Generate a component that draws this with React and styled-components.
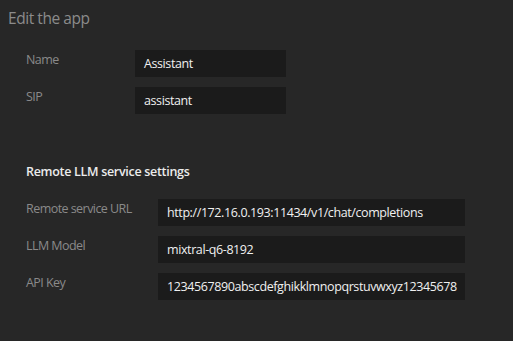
import React from "react";
import styled, { createGlobalStyle } from "styled-components";

const Global = createGlobalStyle`
  html, body { margin: 0; padding: 0; background: #272727; }
  body { font-family: "Open Sans", "Liberation Sans", sans-serif; }
`;

const Page = styled.div`
  width: 513px;
  height: 341px;
  background: #272727;
  box-sizing: border-box;
  padding: 8px 0 0 8px;
`;

const Title = styled.h1`
  margin: 0;
  font-weight: 400;
  font-size: 15.5px;
  line-height: 20px;
  color: #8b8b8b;
  letter-spacing: -0.45px;
`;

const Section = styled.div`
  display: grid;
  grid-template-columns: ${(p) => p.$label}px ${(p) => p.$input}px;
  row-gap: 10px;
  padding-left: 18px;
  margin-top: ${(p) => p.$top}px;
`;

const SectionTitle = styled.h2`
  margin: ${(p) => p.$top}px 0 0 18px;
  font-size: 12.5px;
  font-weight: 600;
  color: #ececec;
  line-height: 16px;
  letter-spacing: -0.3px;
`;

const Label = styled.label`
  font-size: 12.5px;
  color: #8a8a8a;
  line-height: 16px;
  padding-top: 2px;
  letter-spacing: -0.55px;
`;

const Input = styled.div`
  height: 27px;
  box-sizing: border-box;
  background: #1b1b1b;
  color: #f0f0f0;
  font-size: 12.5px;
  line-height: 27px;
  padding: 0 9px;
  letter-spacing: -0.4px;
  white-space: nowrap;
  overflow: hidden;
`;

const fields1 = [
  ["Name", "Assistant"],
  ["SIP", "assistant"],
];
const fields2 = [
  ["Remote service URL", "http://172.16.0.193:11434/v1/chat/completions"],
  ["LLM Model", "mixtral-q6-8192"],
  ["API Key", "1234567890abscdefghikklmnopqrstuvwxyz12345678"],
];

export default function App() {
  return (
    <Page>
      <Global />
      <Title>Edit the app</Title>
      <Section $label={109} $input={151} $top={22}>
        {fields1.map(([l, v]) => (
          <React.Fragment key={l}>
            <Label>{l}</Label>
            <Input>{v}</Input>
          </React.Fragment>
        ))}
      </Section>
      <SectionTitle $top={50}>Remote LLM service settings</SectionTitle>
      <Section $label={132} $input={307} $top={19}>
        {fields2.map(([l, v]) => (
          <React.Fragment key={l}>
            <Label>{l}</Label>
            <Input>{v}</Input>
          </React.Fragment>
        ))}
      </Section>
    </Page>
  );
}
